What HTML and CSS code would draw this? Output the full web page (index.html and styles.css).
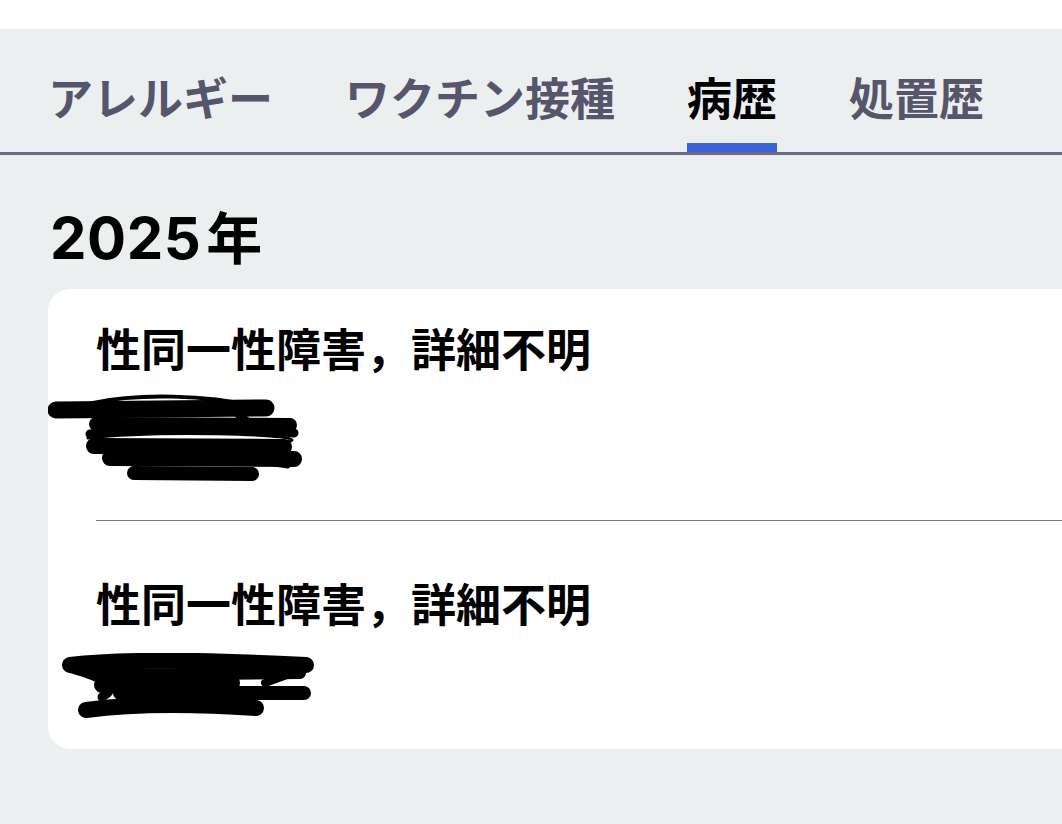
FILE: index.html
```html
<!DOCTYPE html>
<html lang="ja">
<head>
<meta charset="utf-8">
<title>病歴</title>
<link rel="stylesheet" href="styles.css">
</head>
<body>
<div class="topbar"></div>
<nav class="tabs">
  <div class="tab"><span class="tab-label">アレルギー</span></div>
  <div class="tab"><span class="tab-label">ワクチン接種</span></div>
  <div class="tab active"><span class="tab-label">病歴</span></div>
  <div class="tab"><span class="tab-label">処置歴</span></div>
</nav>
<main class="content">
  <h2 class="year"><span class="year-num">2025</span><span class="year-unit">年</span></h2>
  <section class="card">
    <div class="item first">
      <div class="item-title">性同一性障害，詳細不明</div>
      <svg class="redact redact-1" width="256" height="92" viewBox="0 0 256 92" aria-hidden="true">
        <g fill="none" stroke="#000" stroke-linecap="round" stroke-linejoin="round">
          <path d="M8 16 L218 14" stroke-width="17"/>
          <path d="M45 9 C90 -1 160 1 205 12" stroke-width="4"/>
          <path d="M48 30 L242 31" stroke-width="14"/>
          <path d="M42 40 C110 31 205 34 246 39" stroke-width="9"/>
          <path d="M40 44 C110 36 245 40 244 46 C232 56 110 53 52 51" stroke-width="3"/>
          <path d="M46 52 L236 53" stroke-width="16"/>
          <path d="M62 64 L246 65" stroke-width="16"/>
          <path d="M86 79 L204 80" stroke-width="14"/>
          <path d="M100 70 C150 62 200 66 240 72" stroke-width="5"/>
          <path d="M180 12 L200 28" stroke-width="8"/>
        </g>
      </svg>
    </div>
    <div class="item">
      <div class="item-title">性同一性障害，詳細不明</div>
      <svg class="redact redact-2" width="256" height="70" viewBox="0 0 256 70" aria-hidden="true">
        <g fill="none" stroke="#000" stroke-linecap="round" stroke-linejoin="round">
          <path d="M10 12 C60 6 130 6 246 12" stroke-width="16"/>
          <path d="M36 22 L240 20" stroke-width="12"/>
          <path d="M42 32 L172 30" stroke-width="16"/>
          <path d="M60 40 L244 40" stroke-width="14"/>
          <path d="M26 57 C80 50 150 52 196 55" stroke-width="16"/>
          <path d="M12 16 C40 24 62 34 42 44" stroke-width="9"/>
          <path d="M205 30 L238 18" stroke-width="8"/>
          <path d="M120 28 L160 24" stroke-width="10"/>
        </g>
      </svg>
    </div>
  </section>
</main>
</body>
</html>
```

FILE: styles.css
```css
html, body {
  margin: 0;
  padding: 0;
}

body {
  background: #eceff0;
  font-family: "Noto Sans CJK JP", "Noto Sans", sans-serif;
  color: #000;
  overflow: hidden;
}

.topbar {
  height: 29px;
  background: #ffffff;
}

.tabs {
  display: flex;
  gap: 72px;
  padding-left: 48px;
  border-bottom: 3px solid #6e6c80;
}

.tab {
  display: flex;
  flex-direction: column;
  padding-top: 42px;
}

.tab-label {
  font-size: 45px;
  line-height: 52px;
  font-weight: 700;
  color: #56556b;
  white-space: nowrap;
  padding-bottom: 20px;
  border-bottom: 9px solid transparent;
}

.tab.active .tab-label {
  color: #000000;
  border-bottom-color: #3b63d8;
}

.content {
  padding-top: 44px;
}

.year {
  margin: 0 0 16px 50px;
  font-size: 58px;
  line-height: 70px;
  font-weight: 700;
  white-space: nowrap;
}

.year-num {
  font-family: "Inter", "Liberation Sans", sans-serif;
  letter-spacing: 0.5px;
}

.year-unit {
  margin-left: 5px;
  font-family: "Noto Sans CJK JP", sans-serif;
  font-size: 56px;
}

.card {
  margin-left: 48px;
  background: #ffffff;
  border-radius: 22px 0 0 22px;
  padding-left: 48px;
}

.item {
  padding: 56px 0 26px;
}

.item.first {
  padding: 33px 0 34px;
}

.item + .item {
  border-top: 1px solid #7a7a7a;
}

.item-title {
  font-size: 45px;
  line-height: 52px;
  font-weight: 700;
  white-space: nowrap;
}

.redact {
  display: block;
}

.redact-1 {
  margin: 20px 0 0 -48px;
}

.redact-2 {
  margin: 24px 0 0 -36px;
}
```
